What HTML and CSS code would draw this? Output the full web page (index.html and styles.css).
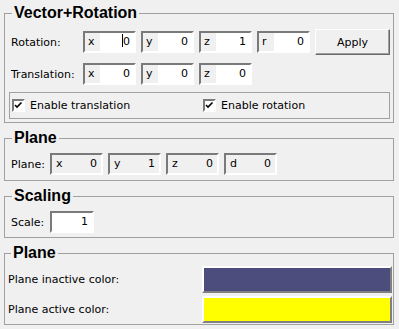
FILE: index.html
```html
<!DOCTYPE html>
<html lang="en">
<head>
    <meta charset="UTF-8">
    <title>Vector+Rotation</title>
    <link rel="stylesheet" href="styles.css">
</head>
<body>
    <fieldset class="group group-vector">
        <legend>Vector+Rotation</legend>
        <div class="row">
            <span class="label">Rotation:</span>
            <div class="num"><span class="pre">x</span><span class="val"><i class="caret"></i>0</span></div>
            <div class="num"><span class="pre">y</span><span class="val">0</span></div>
            <div class="num"><span class="pre">z</span><span class="val">1</span></div>
            <div class="num"><span class="pre">r</span><span class="val">0</span></div>
            <button class="btn">Apply</button>
        </div>
        <div class="row">
            <span class="label">Translation:</span>
            <div class="num"><span class="pre">x</span><span class="val">0</span></div>
            <div class="num"><span class="pre">y</span><span class="val">0</span></div>
            <div class="num"><span class="pre">z</span><span class="val">0</span></div>
        </div>
        <div class="checks">
            <label class="check check-first">
                <span class="box"><svg width="9" height="9" viewBox="0 0 9 9"><path d="M1 4 L3 6 L7.5 1.5" fill="none" stroke="#000" stroke-width="1.6"/></svg></span>
                Enable translation
            </label>
            <label class="check">
                <span class="box"><svg width="9" height="9" viewBox="0 0 9 9"><path d="M1 4 L3 6 L7.5 1.5" fill="none" stroke="#000" stroke-width="1.6"/></svg></span>
                Enable rotation
            </label>
        </div>
    </fieldset>

    <fieldset class="group group-plane">
        <legend>Plane</legend>
        <div class="row-small">
            <span class="label">Plane:</span>
            <div class="num disabled"><span class="pre">x</span><span class="val">0</span></div>
            <div class="num disabled"><span class="pre">y</span><span class="val">1</span></div>
            <div class="num disabled"><span class="pre">z</span><span class="val">0</span></div>
            <div class="num disabled"><span class="pre">d</span><span class="val">0</span></div>
        </div>
    </fieldset>

    <fieldset class="group group-scale">
        <legend>Scaling</legend>
        <div class="row-small">
            <span class="label">Scale:</span>
            <div class="num num-scale"><span class="val">1</span></div>
        </div>
    </fieldset>

    <fieldset class="group group-colors">
        <legend>Plane</legend>
        <div class="color-row">
            <span class="color-label">Plane inactive color:</span>
            <button class="swatch" style="background: #4d4d7d;"></button>
        </div>
        <div class="color-row">
            <span class="color-label">Plane active color:</span>
            <button class="swatch" style="background: #ffff00;"></button>
        </div>
    </fieldset>
</body>
</html>
```

FILE: styles.css
```css
body {
    margin: 0;
    padding: 4px 5px 0 4px;
    background: #f0f0f0;
    font-family: "DejaVu Sans", sans-serif;
    font-size: 11px;
    color: #000;
}
.group {
    border: 1px solid #a0a0a0;
    margin: 0 0 6px;
    padding: 7px 3px 3px 4px;
    min-width: 0;
}
.group legend {
    font: bold 16px/18px "Liberation Sans", sans-serif;
    padding: 0 2px;
    margin-left: 3px;
}
.row {
    display: grid;
    grid-template-columns: 69px repeat(4, 53px) 75px;
    column-gap: 5px;
    align-items: center;
    height: 26px;
    margin-bottom: 6px;
}
.row:nth-of-type(2) {
    margin-bottom: 5px;
}
.label {
    padding-left: 2px;
    white-space: nowrap;
}
.num {
    display: flex;
    height: 22px;
    box-sizing: border-box;
    border: 2px solid;
    border-color: #7a7a7a #fff #fff #7a7a7a;
    background: #fff;
}
.pre {
    width: 12px;
    padding-left: 3px;
    background: #f0f0f0;
    line-height: 18px;
}
.val {
    flex: 1;
    text-align: right;
    padding-right: 4px;
    line-height: 18px;
}
.caret {
    display: inline-block;
    width: 1px;
    height: 13px;
    background: #000;
    vertical-align: -2px;
}
.num.disabled {
    background: #f0f0f0;
}
.num.disabled .pre {
    padding-left: 4px;
}
.btn {
    height: 26px;
    box-sizing: border-box;
    border: 1px solid;
    border-color: #fff #696969 #696969 #fff;
    box-shadow: inset -1px -1px 0 #a0a0a0;
    background: #f0f0f0;
    font-family: "DejaVu Sans", sans-serif;
    font-size: 11px;
    color: #000;
    padding: 0;
}
.checks {
    display: flex;
    border: 1px solid #a0a0a0;
    height: 27px;
    box-sizing: border-box;
    align-items: center;
}
.check {
    display: flex;
    align-items: center;
    gap: 4px;
    padding-left: 2px;
}
.check-first {
    width: 189px;
}
.box {
    display: flex;
    align-items: center;
    justify-content: center;
    width: 13px;
    height: 13px;
    box-sizing: border-box;
    border: 2px solid;
    border-color: #7a7a7a #fff #fff #7a7a7a;
    background: #fff;
    margin-right: 1px;
}
.row-small {
    display: grid;
    grid-template-columns: 36px repeat(4, 53px);
    column-gap: 5px;
    align-items: center;
}
.group-plane {
    padding-top: 6px;
    padding-bottom: 5px;
}
.group-scale {
    padding-top: 6px;
    padding-bottom: 4px;
}
.num-scale {
    width: 44px;
}
.group-colors {
    padding: 4px 1px 1px 3px;
}
.color-row {
    display: flex;
    align-items: center;
    justify-content: space-between;
    margin-bottom: 3px;
}
.color-row:last-child {
    margin-bottom: 0;
}
.swatch {
    width: 190px;
    height: 27px;
    border: 2px solid;
    border-color: #fff #808080 #808080 #fff;
    box-sizing: border-box;
    padding: 0;
}
```
